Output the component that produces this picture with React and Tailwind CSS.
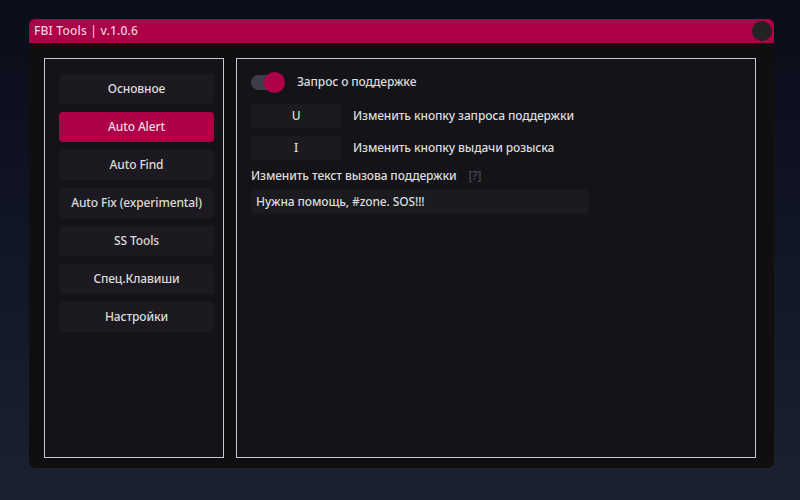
import React from "react";

const tabs = ["Основное", "Auto Alert", "Auto Find", "Auto Fix (experimental)", "SS Tools", "Спец.Клавиши", "Настройки"];

export default function App() {
  return (
    <div
      className="w-[800px] h-[500px] bg-gradient-to-b from-[#090c19] to-[#1b2131] pt-[19px] pl-[29px] text-[12px] font-medium tracking-[-0.12px] text-[#dcdcdc]"
      style={{ fontFamily: '"Noto Sans", "Open Sans", sans-serif' }}
    >
      <div className="w-[745px] h-[449px] bg-[#0f0e11] rounded-[6px] flex flex-col">
        <div className="h-[24px] bg-[#ad0046] rounded-t-[6px] flex items-center justify-between pl-[5px] pr-[2px]">
          <span className="text-[12px] text-[#ecd3df] tracking-[0.2px]">FBI Tools | v.1.0.6</span>
          <div className="w-[20px] h-[20px] rounded-full bg-[#232323]"></div>
        </div>
        <div className="flex gap-[12px] pl-[15px] pt-[15px]">
          <div className="w-[180px] h-[400px] border border-[#c8c8cc] bg-[#141318] pl-[14px] pt-[15px] flex flex-col gap-[8px]">
            {tabs.map((t, i) => (
              <div
                key={t}
                className={
                  "w-[155px] h-[30px] rounded-[4px] flex items-center justify-center " +
                  (i === 1 ? "bg-[#ad0046] text-[#ecdce4]" : "bg-[#1c1a20]")
                }
              >
                {t}
              </div>
            ))}
          </div>
          <div className="w-[520px] h-[400px] border border-[#c8c8cc] bg-[#141318] pl-[14px] pt-[13px]">
            <div className="flex items-center h-[20px]">
              <div className="relative w-[24px] h-[15px] rounded-full bg-[#3e3d49]">
                <div className="absolute left-[13px] top-[-3px] w-[21px] h-[21px] rounded-full bg-[#b0004a]"></div>
              </div>
              <span className="ml-[22px]">Запрос о поддержке</span>
            </div>
            <div className="flex items-center mt-[12px]">
              <div className="w-[90px] h-[24px] rounded-[3px] bg-[#1b1a1f] flex items-center justify-center">U</div>
              <span className="ml-[12px]">Изменить кнопку запроса поддержки</span>
            </div>
            <div className="flex items-center mt-[8px]">
              <div className="w-[90px] h-[24px] rounded-[3px] bg-[#1b1a1f] flex items-center justify-center">I</div>
              <span className="ml-[12px]">Изменить кнопку выдачи розыска</span>
            </div>
            <div className="flex items-center mt-[6px] h-[20px]">
              <span>Изменить текст вызова поддержки</span>
              <span className="ml-[12px] text-[#4a4a52]">[?]</span>
            </div>
            <div className="w-[338px] h-[24px] rounded-[3px] bg-[#1b1a1f] flex items-center pl-[5px] mt-[4px]">
              Нужна помощь, #zone. SOS!!!
            </div>
          </div>
        </div>
      </div>
    </div>
  );
}
